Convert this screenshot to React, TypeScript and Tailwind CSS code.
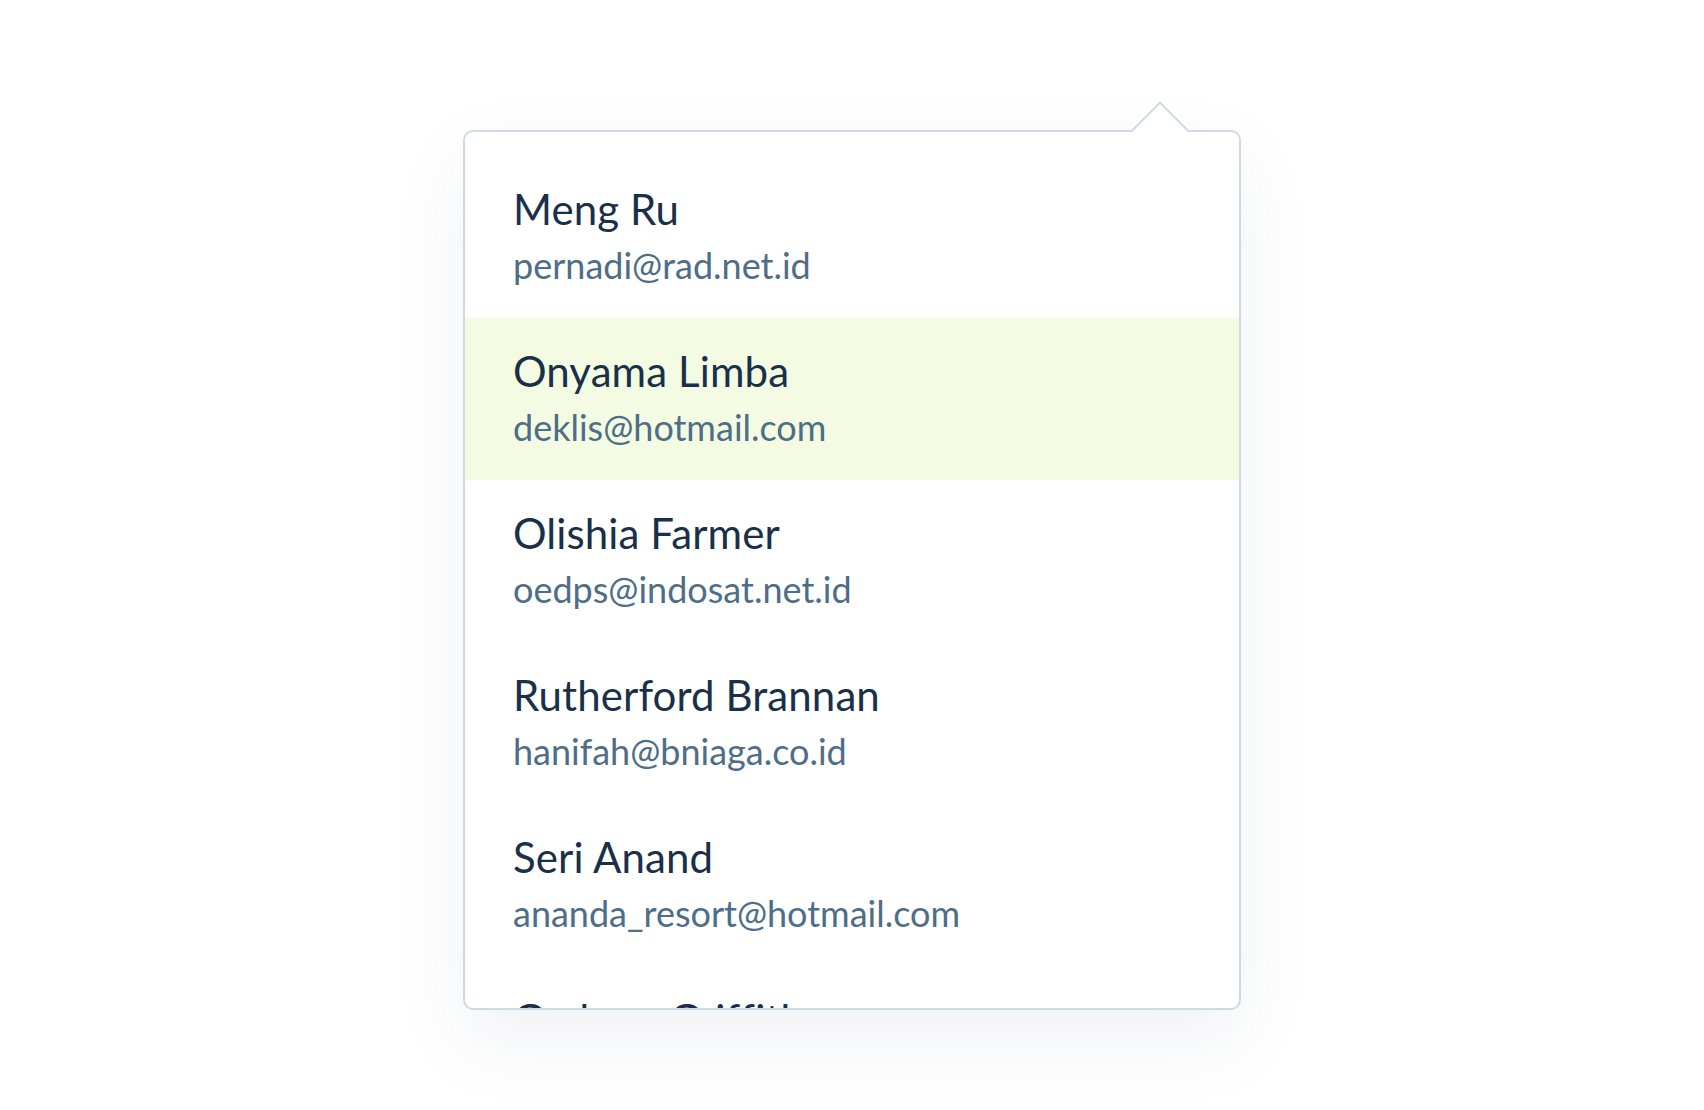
const contacts = [
  { name: 'Meng Ru', email: 'pernadi@rad.net.id' },
  { name: 'Onyama Limba', email: 'deklis@hotmail.com', active: true },
  { name: 'Olishia Farmer', email: 'oedps@indosat.net.id' },
  { name: 'Rutherford Brannan', email: 'hanifah@bniaga.co.id' },
  { name: 'Seri Anand', email: 'ananda_resort@hotmail.com' },
  { name: 'Graham Griffith', email: 'graham@cbn.net.id' },
]

export default function App() {
  return (
    <div className="min-h-[1110px] w-full bg-white flex justify-center pt-[130px] font-['Lato','Noto_Sans',sans-serif]">
      <div className="relative w-[778px] h-[880px] border-2 border-[#cfdbe4] rounded-[10px] bg-white shadow-[0_30px_80px_rgba(30,50,80,0.07)]">
        {/* arrow */}
        <div className="absolute left-[674px] top-[-22px] w-[42px] h-[42px] rotate-45 bg-white border-l-2 border-t-2 border-[#cfdbe4]" />
        <div className="h-full overflow-hidden rounded-[8px] pt-6">
          {contacts.map((c) => (
            <div
              key={c.name}
              className={`h-[162px] pl-12 pt-[28px] ${c.active ? 'bg-[#f3fbe3]' : ''}`}
            >
              <div className="text-[42px] leading-[50px] text-[#1a3049] tracking-[0.1px]">{c.name}</div>
              <div className="mt-[10px] text-[36px] leading-[43px] text-[#4e6e88]">{c.email}</div>
            </div>
          ))}
        </div>
      </div>
    </div>
  )
}
